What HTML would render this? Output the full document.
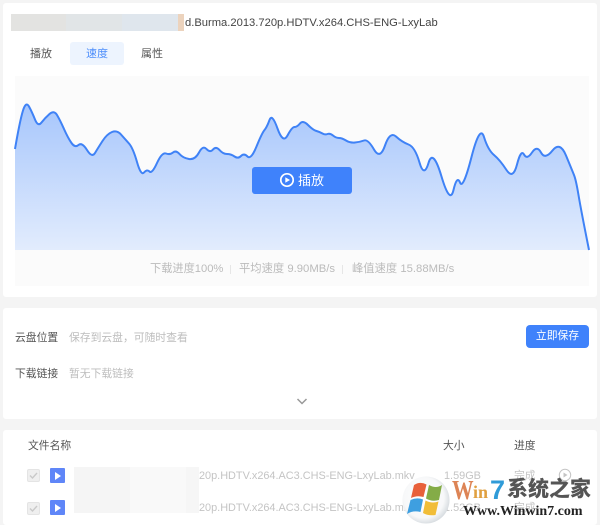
<!DOCTYPE html>
<html lang="zh">
<head>
<meta charset="utf-8">
<style>
html,body{margin:0;padding:0;width:600px;height:525px;overflow:hidden;background:#f4f4f4}
body{position:relative;font-family:"Liberation Sans","Noto Sans CJK SC",sans-serif;color:#333}
.a{position:absolute;white-space:nowrap}
.panel{position:absolute;left:3px;width:594px;background:#fff;border-radius:3px}
.g{color:#bdbdbd}
.cb{position:absolute;left:27px;width:11px;height:11px;border:1px solid #e4e4e4;background:#efefef;border-radius:2px}
.pl{position:absolute;left:50px;width:15px;height:15px;background:#5f86f8;border-radius:1px}
.pl:after{content:"";position:absolute;left:5px;top:3.5px;border-left:6px solid #fff;border-top:4px solid transparent;border-bottom:4px solid transparent}
</style>
</head>
<body>
<div class="panel" style="top:3px;height:294px"></div>
<div class="panel" style="top:308px;height:111px"></div>
<div class="panel" style="top:430px;height:95px"></div>

<div class="a" style="left:11px;top:14px;width:56px;height:17px;background:#e3e3e1"></div>
<div class="a" style="left:66px;top:14px;width:57px;height:17px;background:#e1e5e7"></div>
<div class="a" style="left:122px;top:14px;width:56px;height:17px;background:#dfe6ed"></div>
<div class="a" style="left:178px;top:14px;width:6px;height:17px;background:#ecd3bd"></div>
<div class="a" style="left:185px;top:16px;font-size:11.2px;line-height:15px;color:#444">d.Burma.2013.720p.HDTV.x264.CHS-ENG-LxyLab</div>

<div class="a" style="left:70px;top:42px;width:54px;height:23px;background:#edf4fe;border-radius:3px"></div>
<div class="a" style="left:30px;top:46px;font-size:11px;line-height:16px;color:#555">播放</div>
<div class="a" style="left:86px;top:46px;font-size:11px;line-height:16px;color:#4c8dfb">速度</div>
<div class="a" style="left:141px;top:46px;font-size:11px;line-height:16px;color:#555">属性</div>

<div class="a" style="left:15px;top:76px;width:574px;height:210px;background:#fbfbfb"></div>
<svg class="a" style="left:0;top:0" width="600" height="300" viewBox="0 0 600 300">
<defs><linearGradient id="gr" x1="0" y1="100" x2="0" y2="250" gradientUnits="userSpaceOnUse"><stop offset="0" stop-color="#a5c5fc"/><stop offset="1" stop-color="#e2ecfd"/></linearGradient></defs>
<path fill="url(#gr)" d="M15 149Q20 120 23 110.5Q26 101 29 106.5Q32 112 35 119.5Q38 127 41.500 122.5Q45 118 49.500 114Q54 110 57 115Q60 120 64 129Q68 138 71.500 143Q75 148 78.500 145Q82 142 87 150Q92 158 95 153Q98 148 102.5 141Q107 134 112 132Q117 130 121 134.5Q125 139 129 143.5Q133 148 137 162Q141 176 144 172.5Q147 169 149.5 171.5Q152 174 157 163Q162 152 166 153.5Q170 155 173 152.5Q176 150 179.5 154Q183 158 189 159Q195 160 199 152.5Q203 145 206.5 149Q210 153 213 149.5Q216 146 219.5 150Q223 154 227 154Q231 154 234.5 156.5Q238 159 241 156Q244 153 247.5 156.5Q251 160 256.5 146.5Q262 133 264.5 130Q267 127 269.5 120Q272 113 277.5 128.5Q283 144 287.5 135.5Q292 127 294.5 127Q297 127 300 123.5Q303 120 308 125Q313 130 316.5 131Q320 132 322.5 133.5Q325 135 327.5 134Q330 133 333 135.5Q336 138 339 138Q342 138 346 140.5Q350 143 355 142.5Q360 142 364 140.5Q368 139 374 149.5Q380 160 385 145.5Q390 131 396 136.5Q402 142 408.5 144.5Q415 147 419.5 162.5Q424 178 428.5 163Q433 148 441.5 176.5Q450 205 453.5 190Q457 175 460 182.5Q463 190 471.5 157Q480 124 484 137Q488 150 494 155Q500 160 506.5 170Q513 180 517 164.5Q521 149 524 154.5Q527 160 532 152.5Q537 145 541 152.5Q545 160 552.5 150.5Q560 141 566 155.5Q572 170 574 175Q576 180 578.5 195Q581 210 589 250L15 250Z"/>
<path fill="none" stroke="#3f82f6" stroke-width="2" stroke-linejoin="round" d="M15 149Q20 120 23 110.5Q26 101 29 106.5Q32 112 35 119.5Q38 127 41.500 122.5Q45 118 49.500 114Q54 110 57 115Q60 120 64 129Q68 138 71.500 143Q75 148 78.500 145Q82 142 87 150Q92 158 95 153Q98 148 102.5 141Q107 134 112 132Q117 130 121 134.5Q125 139 129 143.5Q133 148 137 162Q141 176 144 172.5Q147 169 149.5 171.5Q152 174 157 163Q162 152 166 153.5Q170 155 173 152.5Q176 150 179.5 154Q183 158 189 159Q195 160 199 152.5Q203 145 206.5 149Q210 153 213 149.5Q216 146 219.5 150Q223 154 227 154Q231 154 234.5 156.5Q238 159 241 156Q244 153 247.5 156.5Q251 160 256.5 146.5Q262 133 264.5 130Q267 127 269.5 120Q272 113 277.5 128.5Q283 144 287.5 135.5Q292 127 294.5 127Q297 127 300 123.5Q303 120 308 125Q313 130 316.5 131Q320 132 322.5 133.5Q325 135 327.5 134Q330 133 333 135.5Q336 138 339 138Q342 138 346 140.5Q350 143 355 142.5Q360 142 364 140.5Q368 139 374 149.5Q380 160 385 145.5Q390 131 396 136.5Q402 142 408.5 144.5Q415 147 419.5 162.5Q424 178 428.5 163Q433 148 441.5 176.5Q450 205 453.5 190Q457 175 460 182.5Q463 190 471.5 157Q480 124 484 137Q488 150 494 155Q500 160 506.5 170Q513 180 517 164.5Q521 149 524 154.5Q527 160 532 152.5Q537 145 541 152.5Q545 160 552.5 150.5Q560 141 566 155.5Q572 170 574 175Q576 180 578.5 195Q581 210 589 250"/>
</svg>

<div class="a" style="left:252px;top:167px;width:100px;height:27px;background:#3f82fb;border-radius:3px"></div>
<svg class="a" style="left:279px;top:172px" width="16" height="16" viewBox="0 0 16 16"><circle cx="8" cy="8" r="6.2" fill="none" stroke="#fff" stroke-width="1.7"/><path d="M6.3 5.2L11 8L6.3 10.8Z" fill="#fff"/></svg>
<div class="a" style="left:298px;top:173px;font-size:13px;line-height:16px;color:#fff">插放</div>

<div class="a" style="left:150px;top:262px;font-size:11.2px;line-height:15px;color:#bbb">下载进度100%</div>
<div class="a" style="left:230px;top:265px;width:1px;height:9px;background:#e6e6e6"></div>
<div class="a" style="left:239px;top:262px;font-size:11.3px;line-height:15px;color:#bbb">平均速度 9.90MB/s</div>
<div class="a" style="left:342px;top:265px;width:1px;height:9px;background:#e6e6e6"></div>
<div class="a" style="left:352px;top:262px;font-size:11.3px;line-height:15px;color:#bbb">峰值速度 15.88MB/s</div>

<div class="a" style="left:15px;top:330px;font-size:10.8px;line-height:16px;color:#555">云盘位置</div>
<div class="a g" style="left:69px;top:330px;font-size:10.8px;line-height:16px">保存到云盘，可随时查看</div>
<div class="a" style="left:15px;top:366px;font-size:10.8px;line-height:16px;color:#555">下载链接</div>
<div class="a g" style="left:69px;top:366px;font-size:10.8px;line-height:16px">暂无下载链接</div>
<div class="a" style="left:526px;top:325px;width:63px;height:23px;background:#3f82fb;border-radius:4px;color:#fff;font-size:10.8px;line-height:23px;text-align:center">立即保存</div>
<svg class="a" style="left:296px;top:396px" width="12" height="10" viewBox="0 0 12 10"><path d="M1.5 3L6 7.5L10.5 3" fill="none" stroke="#999" stroke-width="1.5"/></svg>

<div class="a" style="left:28px;top:438px;font-size:10.8px;line-height:16px;color:#555">文件名称</div>
<div class="a" style="left:443px;top:438px;font-size:10.8px;line-height:16px;color:#555">大小</div>
<div class="a" style="left:514px;top:438px;font-size:10.8px;line-height:16px;color:#555">进度</div>

<div class="cb" style="top:469px"></div>
<svg class="a" style="left:27px;top:469px" width="13" height="13" viewBox="0 0 13 13"><path d="M3 6.5L5.5 9L10 4" fill="none" stroke="#c9c9c9" stroke-width="1.4"/></svg>
<div class="pl" style="top:468px"></div>
<div class="cb" style="top:502px"></div>
<svg class="a" style="left:27px;top:502px" width="13" height="13" viewBox="0 0 13 13"><path d="M3 6.5L5.5 9L10 4" fill="none" stroke="#c9c9c9" stroke-width="1.4"/></svg>
<div class="pl" style="top:500px"></div>

<div class="a" style="left:199px;top:469px;font-size:10.9px;line-height:15px;color:#c4c4c4">20p.HDTV.x264.AC3.CHS-ENG-LxyLab.mkv</div>
<div class="a" style="left:199px;top:501px;font-size:10.9px;line-height:15px;color:#c4c4c4">20p.HDTV.x264.AC3.CHS-ENG-LxyLab.mkv</div>
<div class="a" style="left:74px;top:467px;width:56px;height:46px;background:#f5f5f5"></div>
<div class="a" style="left:130px;top:467px;width:56px;height:46px;background:#f9f9f9"></div>
<div class="a" style="left:186px;top:467px;width:13px;height:46px;background:#f6f6f6"></div>
<div class="a" style="left:444px;top:469px;font-size:10.9px;line-height:15px;color:#c4c4c4">1.59GB</div>
<div class="a" style="left:444px;top:501px;font-size:10.9px;line-height:15px;color:#c4c4c4">1.52GB</div>
<div class="a" style="left:514px;top:469px;font-size:10.8px;line-height:15px;color:#c4c4c4">完成</div>
<div class="a" style="left:514px;top:501px;font-size:10.8px;line-height:15px;color:#c4c4c4">完成</div>
<svg class="a" style="left:558px;top:468px" width="14" height="14" viewBox="0 0 14 14"><circle cx="7" cy="7" r="5.7" fill="none" stroke="#c4c4c4"/><path d="M5.5 4.5L9.5 7L5.5 9.5Z" fill="#c4c4c4"/></svg>

<svg class="a" style="left:401px;top:474px" width="50" height="51" viewBox="0 0 50 51">
<defs><radialGradient id="orb" cx=".45" cy=".45" r=".6"><stop offset="0" stop-color="#fff"/><stop offset=".72" stop-color="#f7f8f9"/><stop offset="1" stop-color="#cfd5da"/></radialGradient></defs>
<circle cx="25" cy="26" r="23.5" fill="url(#orb)"/>
<path d="M13 11Q19 7 25.500 10.500L22.500 23Q16 21 10 24Z" fill="#e8603a"/>
<path d="M28 11Q35 15 41 11L38 26Q31 28 25 24.500Z" fill="#84ac47"/>
<path d="M9.500 26Q16 23 22 25.500L19.500 38Q12 36 6 40Z" fill="#3e9fe0"/>
<path d="M24.500 26.500Q31 30 37.500 27.500L34.500 41Q27 42 22 39Z" fill="#f1bd38"/>
</svg>
<div class="a" style="left:452px;top:475px;font-family:'Liberation Serif',serif;font-weight:bold;font-size:27px;line-height:30px;color:#dd8455;transform:scaleX(.8);transform-origin:left top">W</div>
<div class="a" style="left:473px;top:475px;font-family:'Liberation Serif',serif;font-weight:bold;font-size:18px;line-height:34px;color:#e0a040">in</div>
<div class="a" style="left:490px;top:475px;font-family:'Liberation Sans',sans-serif;font-weight:bold;font-size:27px;line-height:30px;color:#2f9bd8">7</div>
<div class="a" style="left:507px;top:476px;font-family:'Liberation Sans','Noto Sans CJK SC',sans-serif;font-weight:900;font-size:21px;line-height:28px;color:#555">系统之家</div>
<div class="a" style="left:463px;top:504px;font-family:'Liberation Serif',serif;font-weight:bold;font-size:14px;line-height:16px;color:#222">Www.Winwin7.com</div>
</body>
</html>
